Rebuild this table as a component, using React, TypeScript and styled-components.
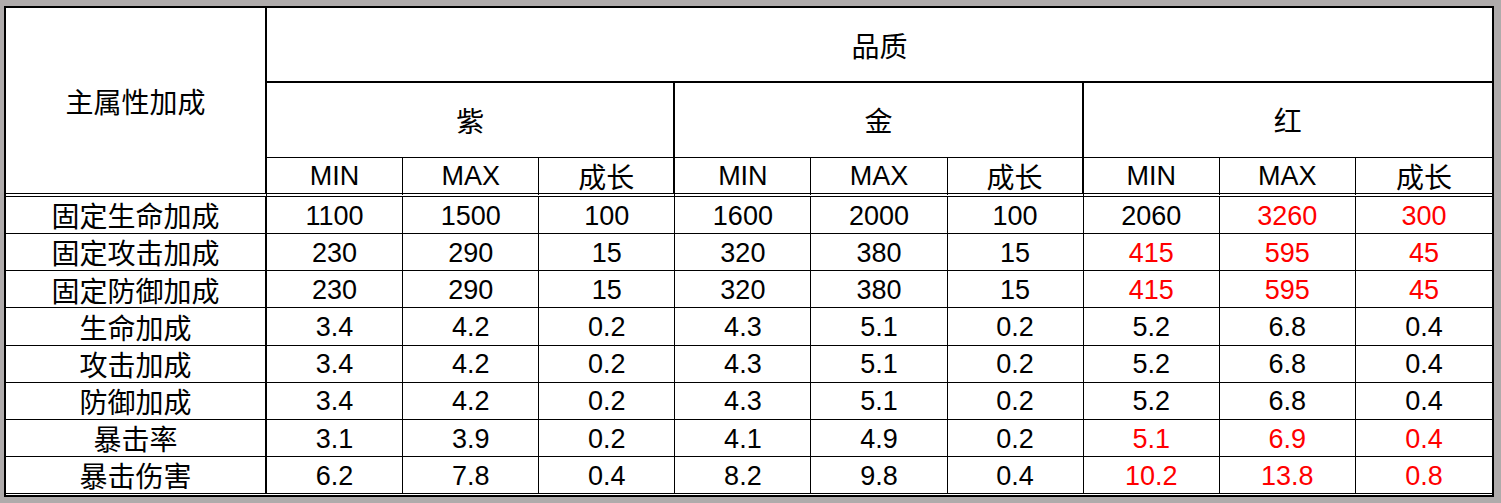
import React from "react";
import styled, { createGlobalStyle } from "styled-components";

const GlobalStyle = createGlobalStyle`
  html, body {
    margin: 0;
    padding: 0;
    background: #afabab;
  }
  body {
    font-family: "Liberation Sans", "Noto Sans CJK SC", sans-serif;
  }
`;

const Page = styled.div`
  width: 1501px;
  height: 503px;
  padding: 6px 0 0 4px;
  box-sizing: border-box;
  background: #afabab;
`;

const Sheet = styled.div`
  width: 1490px;
  height: 491px;
  box-sizing: border-box;
  border: 2px solid #000;
  padding-bottom: 1px;
  background: #fff;
`;

const Grid = styled.div`
  display: grid;
  grid-template-columns: 261px repeat(9, 1fr);
  grid-template-rows: 75px 75px 39px repeat(8, 1fr);
  height: 100%;
`;

type Line = "none" | "thin" | "thick" | "double";

const lineCss = (l: Line) =>
  l === "none"
    ? "none"
    : l === "thin"
    ? "1px solid #000"
    : l === "thick"
    ? "2px solid #000"
    : "4px double #000";

const Cell = styled.div<{
  $right: Line;
  $bottom: Line;
  $cols?: number;
  $rows?: number;
  $red?: boolean;
}>`
  box-sizing: border-box;
  display: flex;
  align-items: center;
  justify-content: center;
  padding-top: 2px;
  min-width: 0;
  grid-column: span ${(p) => p.$cols ?? 1};
  grid-row: span ${(p) => p.$rows ?? 1};
  border-right: ${(p) => lineCss(p.$right)};
  border-bottom: ${(p) => lineCss(p.$bottom)};
  color: ${(p) => (p.$red ? "#ff0000" : "#000")};
  font-size: 27px;
  line-height: 1.2;
  white-space: nowrap;
`;

const Cjk = styled.span`
  font-family: "Noto Sans CJK SC", sans-serif;
  font-size: 28px;
  line-height: 1.2;
`;

type Row = { label: string; values: string[]; red: number[] };

const rows: Row[] = [
  { label: "固定生命加成", values: ["1100", "1500", "100", "1600", "2000", "100", "2060", "3260", "300"], red: [7, 8] },
  { label: "固定攻击加成", values: ["230", "290", "15", "320", "380", "15", "415", "595", "45"], red: [6, 7, 8] },
  { label: "固定防御加成", values: ["230", "290", "15", "320", "380", "15", "415", "595", "45"], red: [6, 7, 8] },
  { label: "生命加成", values: ["3.4", "4.2", "0.2", "4.3", "5.1", "0.2", "5.2", "6.8", "0.4"], red: [] },
  { label: "攻击加成", values: ["3.4", "4.2", "0.2", "4.3", "5.1", "0.2", "5.2", "6.8", "0.4"], red: [] },
  { label: "防御加成", values: ["3.4", "4.2", "0.2", "4.3", "5.1", "0.2", "5.2", "6.8", "0.4"], red: [] },
  { label: "暴击率", values: ["3.1", "3.9", "0.2", "4.1", "4.9", "0.2", "5.1", "6.9", "0.4"], red: [6, 7, 8] },
  { label: "暴击伤害", values: ["6.2", "7.8", "0.4", "8.2", "9.8", "0.4", "10.2", "13.8", "0.8"], red: [6, 7, 8] },
];

const grades = ["紫", "金", "红"];
const subHeads = ["MIN", "MAX", "成长"];

const headRight = (i: number): Line => (i === 8 ? "none" : i % 3 === 2 ? "thick" : "thin");
const dataRight = (i: number): Line => (i === 8 ? "none" : "thin");

export default function App() {
  return (
    <>
      <GlobalStyle />
      <Page>
        <Sheet>
          <Grid>
            <Cell $right="thick" $bottom="double" $rows={3}>
              <Cjk>主属性加成</Cjk>
            </Cell>
            <Cell $right="none" $bottom="thick" $cols={9}>
              <Cjk>品质</Cjk>
            </Cell>
            {grades.map((g, i) => (
              <Cell key={g} $right={i === 2 ? "none" : "thick"} $bottom="thin" $cols={3}>
                <Cjk>{g}</Cjk>
              </Cell>
            ))}
            {grades.flatMap((g, gi) =>
              subHeads.map((s, si) => {
                const idx = gi * 3 + si;
                return (
                  <Cell key={g + s} $right={headRight(idx)} $bottom="double">
                    {s === "成长" ? <Cjk>{s}</Cjk> : s}
                  </Cell>
                );
              })
            )}
            {rows.map((r) => (
              <React.Fragment key={r.label}>
                <Cell $right="thick" $bottom="thin">
                  <Cjk>{r.label}</Cjk>
                </Cell>
                {r.values.map((v, i) => (
                  <Cell key={i} $right={dataRight(i)} $bottom="thin" $red={r.red.includes(i)}>
                    {v}
                  </Cell>
                ))}
              </React.Fragment>
            ))}
          </Grid>
        </Sheet>
      </Page>
    </>
  );
}
